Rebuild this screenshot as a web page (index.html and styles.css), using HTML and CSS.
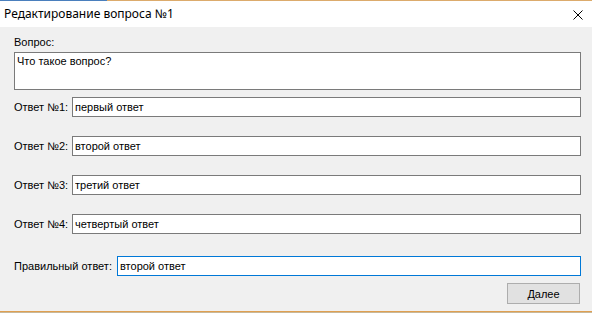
FILE: index.html
```html
<!DOCTYPE html>
<html lang="ru">
     <head>
          <meta charset="UTF-8">
          <meta name="viewport" content="width=device-width, initial-scale=1.0">
          <title>Редактирование вопроса №1</title>
          <link rel="stylesheet" href="styles.css">
     </head>
     <body>
          <div class="window">
               <div class="top-line"></div>
               <div class="title-bar">
                    <span class="title">Редактирование вопроса №1</span>
                    <svg class="close" width="10" height="10" viewBox="0 0 10 10">
                         <path d="M0.5 0.5 L9.5 9.5 M9.5 0.5 L0.5 9.5" stroke="#000" stroke-width="1" fill="none"/>
                    </svg>
               </div>
               <div class="content">
                    <div class="label">Вопрос:</div>
                    <textarea class="question">Что такое вопрос?</textarea>
                    <div class="row">
                         <label class="row-label">Ответ №1:</label>
                         <input class="field" type="text" value="первый ответ">
                    </div>
                    <div class="row">
                         <label class="row-label">Ответ №2:</label>
                         <input class="field" type="text" value="второй ответ">
                    </div>
                    <div class="row">
                         <label class="row-label">Ответ №3:</label>
                         <input class="field" type="text" value="третий ответ">
                    </div>
                    <div class="row">
                         <label class="row-label">Ответ №4:</label>
                         <input class="field" type="text" value="четвертый ответ">
                    </div>
                    <div class="row row-correct">
                         <label class="row-label wide">Правильный ответ:</label>
                         <input class="field active" type="text" value="второй ответ">
                    </div>
                    <div class="actions">
                         <button class="next-btn">Далее</button>
                    </div>
               </div>
               <div class="bottom-line"></div>
          </div>
     </body>
</html>
```

FILE: styles.css
```css
body {
     margin: 0;
     padding: 0;
     font-family: "Liberation Sans", Arial, sans-serif;
     font-size: 11px;
     color: #000;
     background-color: #f0f0f0;
}
.window {
     width: 592px;
     height: 313px;
     display: flex;
     flex-direction: column;
     overflow: hidden;
}
.top-line {
     height: 1px;
     background: linear-gradient(to right, #4a7fbd 0, #4a7fbd 107px, #dcab6c 107px);
}
.title-bar {
     height: 26px;
     background-color: #fff;
     display: flex;
     align-items: center;
     justify-content: space-between;
     padding: 0 9px 0 4px;
}
.title {
     font-family: "Noto Sans", sans-serif;
     font-size: 12px;
     margin-top: -1px;
}
.close {
     display: block;
     margin-top: 1px;
}
.content {
     flex: 1;
     background-color: #f0f0f0;
     padding: 9px 11px 0 14px;
     display: flex;
     flex-direction: column;
}
.label {
     line-height: 13px;
}
.question {
     margin: 3px 0 0 0;
     height: 38px;
     box-sizing: border-box;
     border: 1px solid #7a7a7a;
     padding: 2px 2px;
     font-family: "Liberation Sans", Arial, sans-serif;
     font-size: 11px;
     line-height: 13px;
     resize: none;
     background-color: #fff;
     outline: none;
}
.row {
     display: flex;
     align-items: center;
     margin-top: 19px;
}
.row:first-of-type {
     margin-top: 7px;
}
.question + .row {
     margin-top: 7px;
}
.row-correct {
     margin-top: 22px;
}
.row-label {
     width: 58px;
     flex-shrink: 0;
     line-height: 13px;
     padding-top: 1px;
}
.row-label.wide {
     width: 103px;
}
.field {
     flex: 1;
     height: 20px;
     box-sizing: border-box;
     border: 1px solid #7a7a7a;
     padding: 0 2px;
     margin: 0;
     font-family: "Liberation Sans", Arial, sans-serif;
     font-size: 11px;
     line-height: 13px;
     background-color: #fff;
     outline: none;
}
.field.active {
     border-color: #0078d7;
}
.actions {
     display: flex;
     justify-content: flex-end;
     margin-top: 7px;
     padding-right: 1px;
}
.next-btn {
     width: 73px;
     height: 21px;
     border: 1px solid #adadad;
     background-color: #e1e1e1;
     font-family: "Liberation Sans", Arial, sans-serif;
     font-size: 11px;
     padding: 0;
     margin: 0;
}
.bottom-line {
     height: 2px;
     background: linear-gradient(to bottom, #e0a050 0, #e0a050 1px, #c8b89a 1px);
}
```
